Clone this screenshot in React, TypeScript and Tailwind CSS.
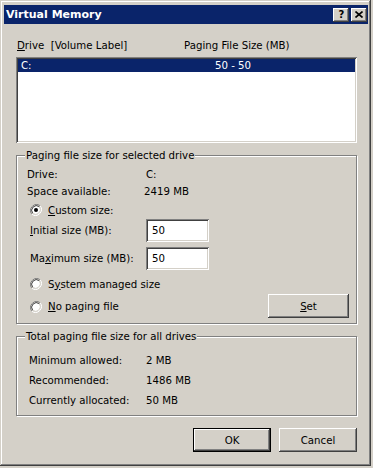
import React from "react";

const raised =
  "bg-[#d4d0c8] shadow-[inset_-1px_-1px_0_#404040,inset_1px_1px_0_#ffffff,inset_-2px_-2px_0_#808080,inset_2px_2px_0_#d4d0c8]";
const sunken =
  "bg-white shadow-[inset_1px_1px_0_#808080,inset_-1px_-1px_0_#ffffff,inset_2px_2px_0_#404040,inset_-2px_-2px_0_#d4d0c8]";

function Radio({ checked }: { checked?: boolean }) {
  return (
    <svg width="12" height="12" viewBox="0 0 12 12" className="shrink-0">
      <path d="M10.2 1.8 A6 6 0 0 0 1.8 10.2" fill="none" stroke="#808080" strokeWidth="1" />
      <path d="M1.8 10.2 A6 6 0 0 0 10.2 1.8" fill="none" stroke="#ffffff" strokeWidth="1" />
      <circle cx="6" cy="6" r="4.6" fill="#ffffff" />
      <path d="M9.3 2.7 A4.7 4.7 0 0 0 2.7 9.3" fill="none" stroke="#404040" strokeWidth="1" />
      <path d="M2.7 9.3 A4.7 4.7 0 0 0 9.3 2.7" fill="none" stroke="#d4d0c8" strokeWidth="1" />
      {checked && <circle cx="6" cy="6" r="2" fill="#000000" />}
    </svg>
  );
}

function U({ children }: { children: React.ReactNode }) {
  return <span className="underline underline-offset-[1px]">{children}</span>;
}

export default function App() {
  return (
    <div className="w-[373px] h-[468px] bg-[#d4d0c8] font-['DejaVu_Sans',sans-serif] text-[10.2px] leading-[13px] text-black">
      <div className="w-[371px] h-[466px] shadow-[inset_-1px_-1px_0_#404040,inset_1px_1px_0_#d4d0c8,inset_-2px_-2px_0_#808080,inset_2px_2px_0_#ffffff] pt-[5px] pl-[4px] pr-[3px]">
        {/* Title bar */}
        <div className="h-[19px] bg-[#0a246a] flex items-center justify-between pl-[2px] pr-[1px]">
          <span className="text-white font-bold text-[11px]">Virtual Memory</span>
          <div className="flex gap-[2px]">
            <div className={`w-[16px] h-[14px] ${raised} flex items-center justify-center`}>
              <span className="font-bold text-[10px] leading-[10px] pl-[1px]">?</span>
            </div>
            <div className={`w-[16px] h-[14px] ${raised} flex items-center justify-center`}>
              <svg width="8" height="7" viewBox="0 0 8 7">
                <path d="M0.5 0.5 L7.5 6.5 M7.5 0.5 L0.5 6.5" stroke="#000" strokeWidth="1.6" />
              </svg>
            </div>
          </div>
        </div>

        <div className="pl-[12px] pr-[11px]">
          {/* List header */}
          <div className="mt-[15px] flex h-[13px] pl-[1px]">
            <span className="w-[167px]">
              <U>D</U>rive&nbsp;&nbsp;[Volume Label]
            </span>
            <span>Paging File Size (MB)</span>
          </div>

          {/* List box */}
          <div className={`mt-[5px] h-[86px] ${sunken} p-[2px]`}>
            <div className="h-[13px] bg-[#0a246a] text-white flex items-center pl-[3px]">
              <span className="w-[194px]">C:</span>
              <span>50 - 50</span>
            </div>
          </div>

          {/* Group 1 */}
          <fieldset className="mt-[6px] border border-[#808080] shadow-[inset_1px_1px_0_#ffffff,1px_1px_0_#ffffff] pl-[10px] pr-[7px] pb-[5px]">
            <legend className="ml-[-2px] px-[1px] bg-[#d4d0c8] relative">Paging file size for selected drive</legend>
            <div className="mt-[4px] h-[17px] flex items-center">
              <span className="w-[119px]">Drive:</span>
              <span>C:</span>
            </div>
            <div className="h-[17px] flex items-center">
              <span className="w-[117px]">Space available:</span>
              <span>2419 MB</span>
            </div>
            <div className="mt-[1px] h-[18px] flex items-center pl-[3px] gap-[6px]">
              <Radio checked />
              <span>
                <U>C</U>ustom size:
              </span>
            </div>
            <div className="h-[23px] flex items-center pl-[3px]">
              <span className="w-[116px]">
                <U>I</U>nitial size (MB):
              </span>
              <div className={`w-[63px] h-[23px] ${sunken} flex items-center pl-[6px]`}>50</div>
            </div>
            <div className="mt-[5px] h-[23px] flex items-center pl-[3px]">
              <span className="w-[116px]">
                Ma<U>x</U>imum size (MB):
              </span>
              <div className={`w-[63px] h-[23px] ${sunken} flex items-center pl-[6px]`}>50</div>
            </div>
            <div className="mt-[6px] h-[16px] flex items-center pl-[3px] gap-[6px]">
              <Radio />
              <span>
                S<U>y</U>stem managed size
              </span>
            </div>
            <div className="mt-[2px] h-[24px] flex items-center justify-between pl-[3px]">
              <div className="flex items-center gap-[6px] mt-[1px]">
                <Radio />
                <span>
                  <U>N</U>o paging file
                </span>
              </div>
              <div className={`w-[81px] h-[24px] ${raised} flex items-center justify-center`}>
                <span>
                  <U>S</U>et
                </span>
              </div>
            </div>
          </fieldset>

          {/* Group 2 */}
          <fieldset className="mt-[6px] border border-[#808080] shadow-[inset_1px_1px_0_#ffffff,1px_1px_0_#ffffff] pl-[12px] pr-[7px] pb-[5px]">
            <legend className="ml-[-4px] px-[1px] bg-[#d4d0c8] relative">Total paging file size for all drives</legend>
            <div className="mt-[7px] h-[20px] flex items-center">
              <span className="w-[117px]">Minimum allowed:</span>
              <span>2 MB</span>
            </div>
            <div className="h-[20px] flex items-center">
              <span className="w-[117px]">Recommended:</span>
              <span>1486 MB</span>
            </div>
            <div className="h-[20px] flex items-center">
              <span className="w-[117px]">Currently allocated:</span>
              <span>50 MB</span>
            </div>
          </fieldset>

          {/* Buttons */}
          <div className="mt-[12px] flex justify-end gap-[8px]">
            <div className="w-[78px] h-[24px] border border-black">
              <div className={`w-full h-full ${raised} flex items-center justify-center`}>OK</div>
            </div>
            <div className={`w-[78px] h-[24px] ${raised} flex items-center justify-center`}>Cancel</div>
          </div>
        </div>
      </div>
    </div>
  );
}
